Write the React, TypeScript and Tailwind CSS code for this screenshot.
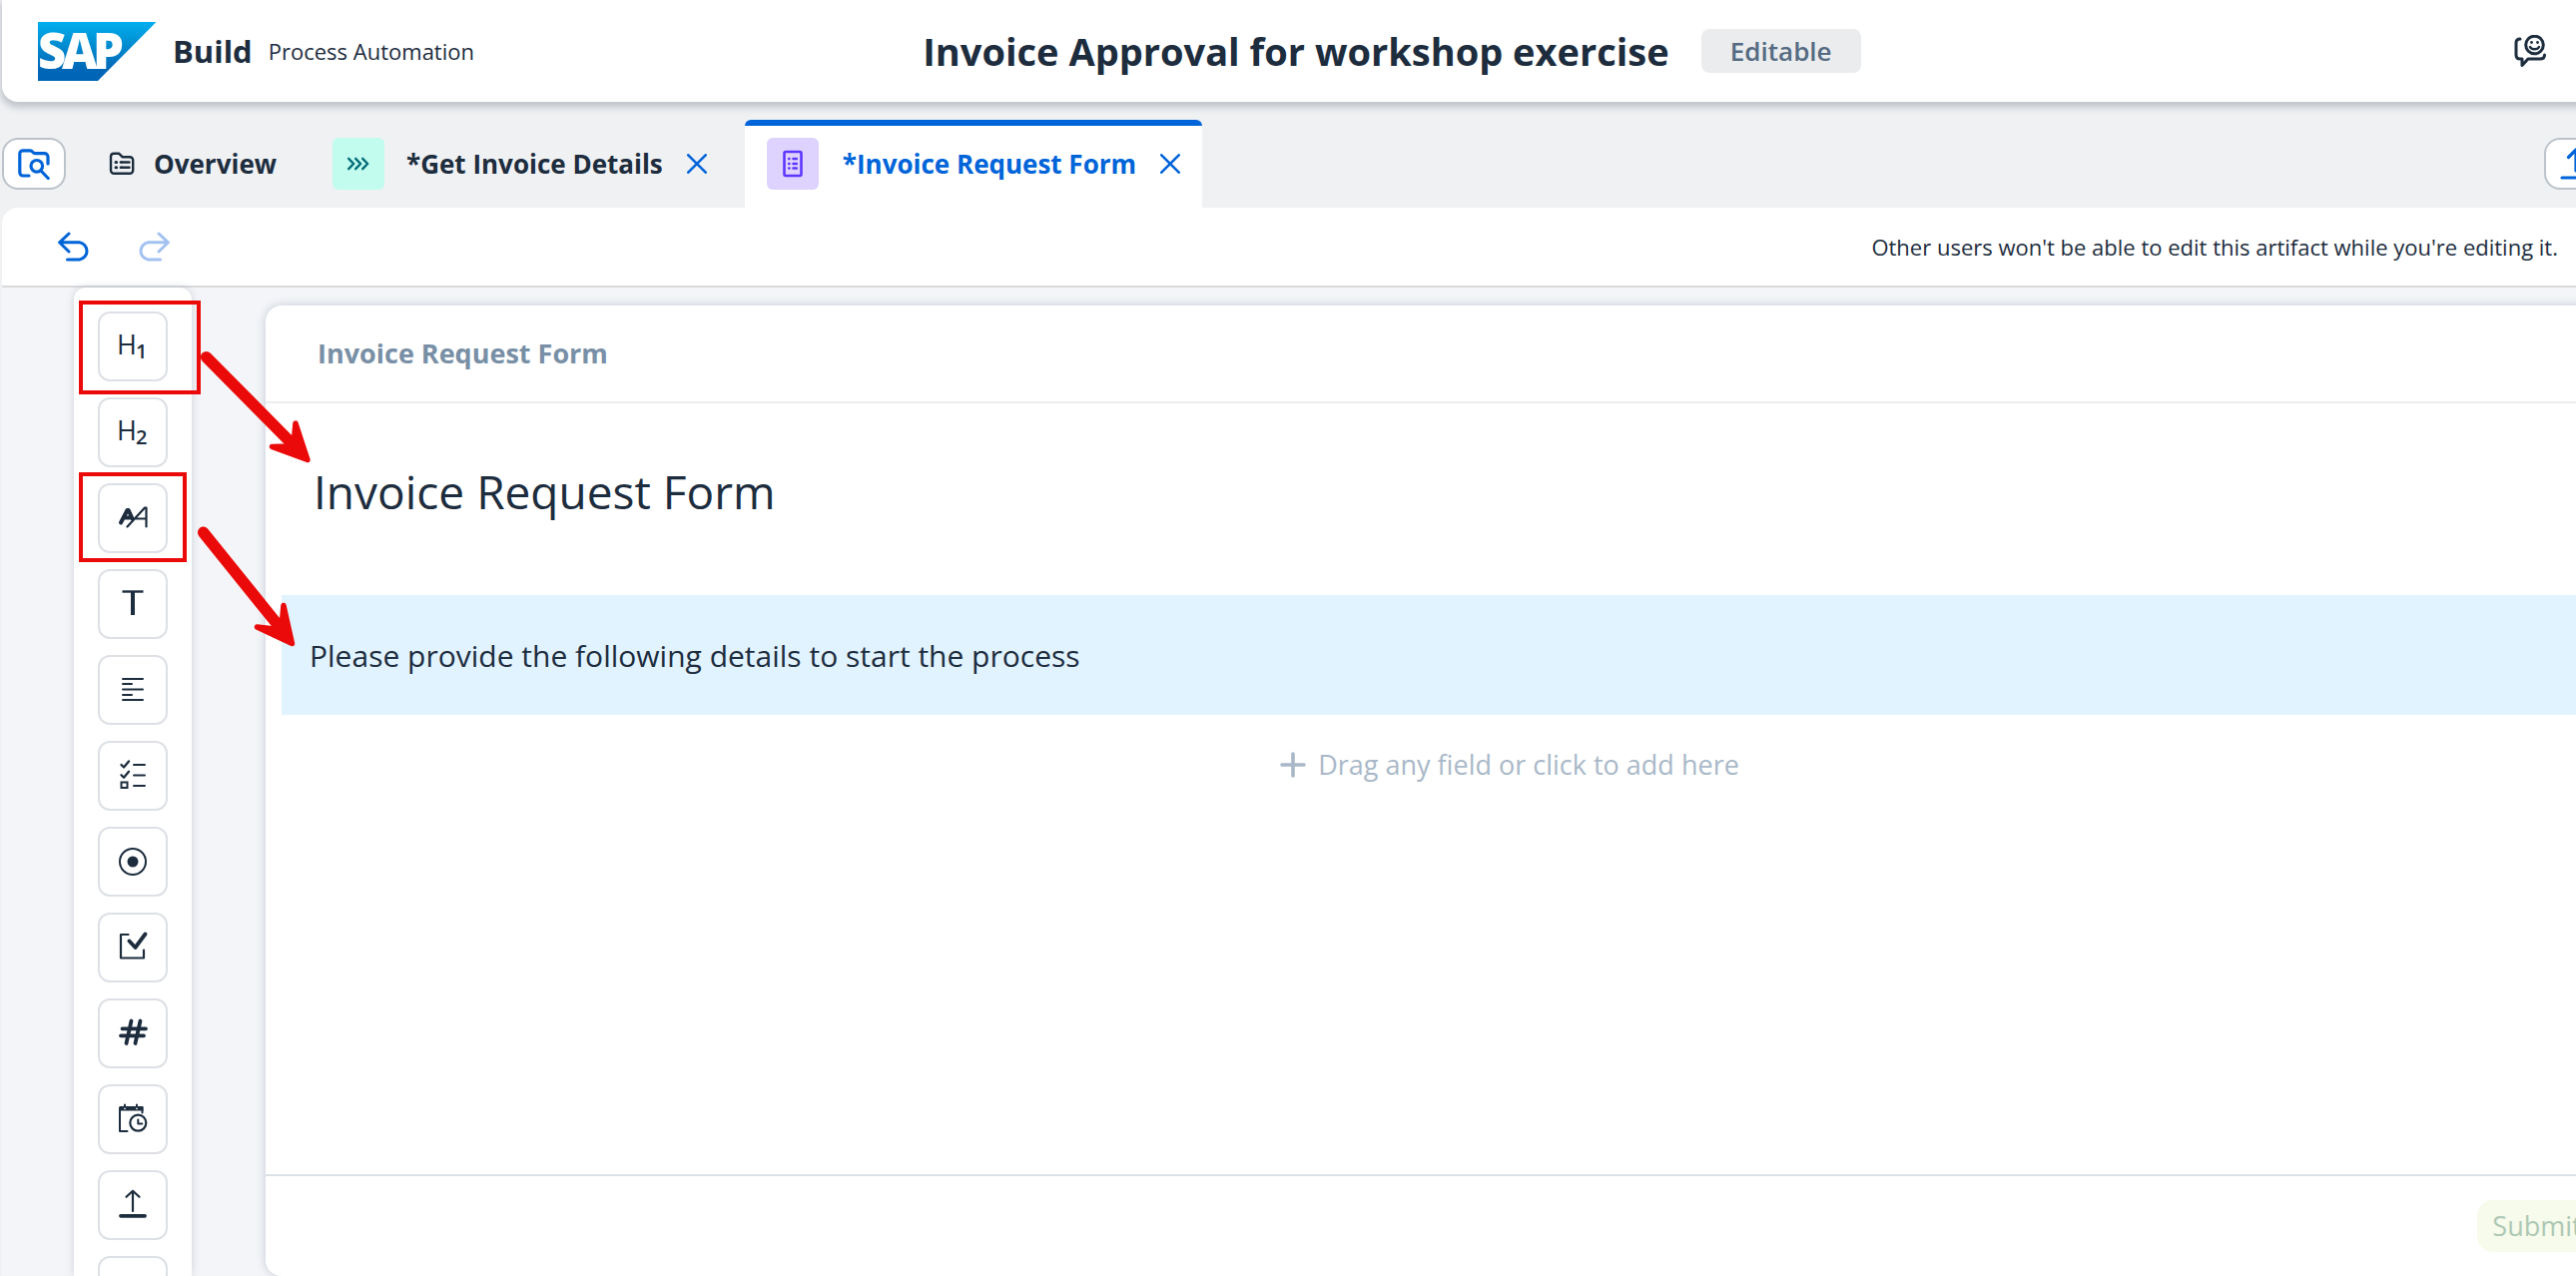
import type { ReactNode } from "react";

type IconProps = { className?: string };

const ink = "text-[#1d2d3e]";

function SapLogo() {
  return (
    <svg width="119" height="59" viewBox="0 0 119 59" role="img" aria-label="SAP" className="shrink-0">
      <defs>
        <linearGradient id="sap-blue" x1="0" y1="0" x2="0" y2="1">
          <stop offset="0" stopColor="#00aeef" />
          <stop offset="0.35" stopColor="#0090d3" />
          <stop offset="0.8" stopColor="#0067b8" />
          <stop offset="1" stopColor="#0064b4" />
        </linearGradient>
      </defs>
      <path d="M0 0H118.500L60 59H0Z" fill="url(#sap-blue)" />
      <g fill="#fff" fontFamily="Open Sans, sans-serif" fontWeight="800" fontSize="49">
        <text x="0" y="47">S</text>
        <text x="24" y="47">A</text>
        <text x="55" y="47">P</text>
      </g>
    </svg>
  );
}

function Icon({ children, className = "", size = 32 }: IconProps & { children: ReactNode; size?: number }) {
  return (
    <svg
      width={size}
      height={size}
      viewBox={`0 0 ${size} ${size}`}
      fill="none"
      stroke="currentColor"
      strokeWidth="2"
      strokeLinecap="round"
      strokeLinejoin="round"
      aria-hidden="true"
      className={`shrink-0 ${className}`}
    >
      {children}
    </svg>
  );
}

const FeedbackIcon = () => (
  <Icon className={ink}>
    <g strokeWidth="3">
      <path d="M6 4C3 4 2 5.500 2 8v12c0 2.500 1.500 4 4 4h2v6.500L14 24h12c3 0 4.500-1.500 4.500-4" />
      <circle cx="20.500" cy="10" r="8.800" />
      <path d="M16 12c1.500 3 7.500 3 9 0" strokeWidth="2.500" />
    </g>
    <g fill="currentColor" stroke="none">
      <circle cx="17.500" cy="7.500" r="1.400" />
      <circle cx="23.500" cy="7.500" r="1.400" />
    </g>
  </Icon>
);

const FolderSearchIcon = () => (
  <Icon>
    <g strokeWidth="3.200">
      <path d="M11 28H5a3.200 3.200 0 0 1-3.200-3.200V6A3.200 3.200 0 0 1 5 2.800h7.500c2 0 2.500 2.900 4.500 2.900h9.500a3.500 3.500 0 0 1 3.500 3.500V16" />
      <circle cx="18.800" cy="18.300" r="5.800" />
      <path d="m23 23 7.200 7.500" />
    </g>
  </Icon>
);

const FolderListIcon = () => (
  <Icon size={28} className={ink}>
    <g strokeWidth="2.400">
      <path d="M3 6.500A3 3 0 0 1 6 3.700h5l3.500 3.500H22a3.200 3.200 0 0 1 3.200 3.200v10.200a3.200 3.200 0 0 1-3.200 3.200H6.200A3.200 3.200 0 0 1 3 20.600Z" />
      <path d="M14 12.500h7.500M14 17.700h7.500" />
      <path d="M8 12.500h.6M8 17.700h.6" strokeWidth="3" />
      <path d="M12.800 12.500h1M12.800 17.700h1" />
    </g>
  </Icon>
);

const ChevronsIcon = () => (
  <Icon size={28} className="text-[#046c7a]">
    <g strokeWidth="2.400">
      <path d="m4.200 8.800 5 5.200-5 5.200M11.200 8.800l5 5.200-5 5.200M18.200 8.800l5 5.200-5 5.200" />
    </g>
  </Icon>
);

const FormIcon = () => (
  <Icon className="text-[#5d36ff]">
    <rect x="7.500" y="4" width="17" height="24" rx="1.500" strokeWidth="2.600" />
    <path d="M12.200 11h.2M12.200 16h.2M12.200 20.500h.2" strokeWidth="2.600" />
    <path d="M16.500 11h3.300M16.500 16h3.300M16.500 20.500h3.300" strokeWidth="2.600" />
  </Icon>
);

const CloseIcon = () => (
  <Icon size={20}>
    <path d="m1.300 1.300 17.400 17.400M18.700 1.300 1.300 18.700" strokeWidth="2.600" />
  </Icon>
);

const UndoIcon = ({ className = "" }: IconProps) => (
  <Icon className={className}>
    <path d="M11 3 1.600 11.800 11 21M1.600 11.800h20a8.700 8.700 0 0 1 0 17.200H9.500" strokeWidth="3" />
  </Icon>
);

const UploadIcon = () => (
  <Icon>
    <path d="M16 23V3M8.500 9.500 16 2l7.500 7.500M2 30h28" strokeWidth="3.200" />
  </Icon>
);

const PlusIcon = () => (
  <Icon size={26}>
    <path d="M13 2v22M2 13h22" strokeWidth="3.600" />
  </Icon>
);

function Heading({ level }: { level: string }) {
  return (
    <Icon>
      <g fill="currentColor" stroke="none" fontFamily="Open Sans, sans-serif">
        <text x="0" y="24" fontSize="27">H</text>
        <text x="19" y="28" fontSize="20" fontWeight="600">{level}</text>
      </g>
    </Icon>
  );
}

const palette: { label: string; icon: ReactNode }[] = [
  { label: "Headline 1", icon: <Heading level="1" /> },
  { label: "Headline 2", icon: <Heading level="2" /> },
  {
    label: "Paragraph",
    icon: (
      <Icon>
        <path d="M4 20.500 10.500 8h1.200l3.800 8.500M7.500 15.500h6" strokeWidth="4" />
        <path d="M10.500 24.500 28 5.500h1.500v19M19.500 16.500h10" strokeWidth="2.200" />
      </Icon>
    ),
  },
  {
    label: "Text",
    icon: (
      <Icon>
        <g strokeLinecap="butt">
          <path d="M5.500 3.500h21" strokeWidth="2.400" />
          <path d="M16 3v24" strokeWidth="4" />
        </g>
      </Icon>
    ),
  },
  { label: "Text Area", icon: <Icon><path d="M6 5h20M6 10h9M6 15.500h20M6 21h9M6 26h20" /></Icon> },
  {
    label: "Choice",
    icon: (
      <Icon>
        <path d="m4.500 5 2.500 2.500 5-6M4.500 15.300 7 17.800l5-6" strokeWidth="2.300" />
        <rect x="4.500" y="22.500" width="6" height="5.500" strokeLinejoin="miter" />
        <path d="M17 5h11M17 15.500h11M17 26h11" />
      </Icon>
    ),
  },
  {
    label: "Radio Button",
    icon: (
      <Icon>
        <circle cx="16" cy="16" r="13" />
        <circle cx="16" cy="16" r="5.500" fill="currentColor" stroke="none" />
      </Icon>
    ),
  },
  {
    label: "Checkbox",
    icon: (
      <Icon>
        <path d="M11.500 3H4v23.500h23V18.500" strokeWidth="2.200" />
        <path d="m12.500 9.500 6 6.500L28.500 2.500" strokeWidth="3.800" />
      </Icon>
    ),
  },
  {
    label: "Number",
    icon: (
      <Icon>
        <path d="M14.500 3.500 9.500 26M23.500 3.500l-5 22.500M5.500 11.300H29M4 18.300h23" strokeWidth="3.800" />
      </Icon>
    ),
  },
  {
    label: "Date",
    icon: (
      <Icon>
        <path d="M10.500 28H3V5h22.500v4.500" />
        <path d="M2.500 3h24v4.500h-24Z" fill="currentColor" stroke="none" />
        <path d="M8 1.500V3M20 1.500V3" />
        <path d="M8 5.300v.2M20 5.300v.2" stroke="#fff" strokeWidth="1.600" />
        <circle cx="21.300" cy="19.700" r="8" strokeWidth="2.200" />
        <path d="M21.300 16.500v4h4" />
      </Icon>
    ),
  },
  {
    label: "File",
    icon: (
      <Icon>
        <path d="M16 22V1.800M9.500 7.800l6.500-6 6.500 6" strokeWidth="2.200" />
        <path d="M4 26.800h24" strokeWidth="3.800" />
      </Icon>
    ),
  },
  { label: "File Attachment", icon: <Icon><path d="M6 24h20" /></Icon> },
];

function Header() {
  return (
    <header className="relative z-10 -mr-[206px] grid h-[102px] shrink-0 grid-cols-[1fr_auto_1fr] items-center rounded-bl-2xl bg-white shadow-[0_4px_6px_2px_rgba(85,95,110,0.28)]">
      <div className="flex items-center gap-4 pl-9">
        <SapLogo />
        <span className="text-[31px] leading-10 font-bold">Build</span>
        <span className="text-[22px] leading-8">Process Automation</span>
      </div>
      <div className="flex items-center gap-8">
        <h1 className="text-[38px] leading-[52px] font-bold">Invoice Approval for workshop exercise</h1>
        <span className="flex h-11 w-40 items-center justify-center rounded-lg bg-[#eaecee] text-[26px] font-semibold text-[#556b82]">
          Editable
        </span>
      </div>
      <div className="flex justify-end pr-[236px]">
        <button aria-label="Feedback">
          <FeedbackIcon />
        </button>
      </div>
    </header>
  );
}

function Tabs() {
  return (
    <nav className="flex h-[106px] shrink-0 items-stretch pt-[18px] text-[26px] font-bold">
      <button
        aria-label="Browse project"
        className="flex h-[52px] w-16 items-center justify-center self-center rounded-2xl border-2 border-[#bcc3ca] bg-white text-[#0064d9]"
      >
        <FolderSearchIcon />
      </button>
      <a href="#overview" className="ml-5 flex items-center gap-[18px] pr-[18px] pl-[22px]">
        <FolderListIcon />
        Overview
      </a>
      <div className="ml-4 flex items-center gap-6 px-[22px]">
        <a href="#details" className="flex items-center gap-[22px]">
          <span className="flex size-[52px] items-center justify-center rounded-md bg-[#c2fcee]">
            <ChevronsIcon />
          </span>
          *Get Invoice Details
        </a>
        <button aria-label="Close Get Invoice Details" className="text-[#0064d9]">
          <CloseIcon />
        </button>
      </div>
      <div className="relative ml-4 flex items-center gap-6 overflow-hidden rounded-t-md bg-white px-[22px] text-[#0064d9]">
        <span className="absolute inset-x-0 top-0 h-1.5 bg-[#0064d9]" />
        <a href="#form" aria-current="page" className="flex items-center gap-6">
          <span className="flex size-[52px] items-center justify-center rounded-md bg-[#ded3ff]">
            <FormIcon />
          </span>
          *Invoice Request Form
        </a>
        <button aria-label="Close Invoice Request Form">
          <CloseIcon />
        </button>
      </div>
      <button
        aria-label="Release"
        className="-mr-8 ml-auto flex h-[52px] w-16 items-center justify-center self-center rounded-2xl border-2 border-[#bcc3ca] bg-white text-[#0064d9]"
      >
        <UploadIcon />
      </button>
    </nav>
  );
}

function Toolbar() {
  return (
    <div className="flex h-20 shrink-0 items-center rounded-tl-2xl border-b-2 border-[#d9dadb] bg-white pr-[18px] pl-14">
      <button aria-label="Undo" className="text-[#0064d9]">
        <UndoIcon />
      </button>
      <button aria-label="Redo" disabled className="ml-12 text-[#a3c2f2]">
        <UndoIcon className="-scale-x-100" />
      </button>
      <p className="ml-auto text-[22px] leading-8">Other users won't be able to edit this artifact while you're editing it.</p>
    </div>
  );
}

function Palette() {
  return (
    <aside className="ml-[72px] flex w-[118px] shrink-0 flex-col items-center gap-4 rounded-t-xl bg-white pt-6 shadow-[0_0_8px_rgba(85,107,130,0.25)]">
      {palette.map((item) => (
        <button
          key={item.label}
          aria-label={item.label}
          className="flex size-[70px] shrink-0 items-center justify-center rounded-xl border-2 border-[#dde0e5] bg-white"
        >
          {item.icon}
        </button>
      ))}
    </aside>
  );
}

function FormCanvas() {
  return (
    <main className="mt-[18px] -mr-[178px] ml-[74px] flex min-w-0 flex-1 flex-col rounded-2xl bg-white shadow-[0_0_8px_1px_rgba(85,107,130,0.25)]">
      <div className="flex h-[98px] shrink-0 items-center border-b-2 border-[#ebecee] pl-[52px] text-[27px] font-bold text-[#788fa6]">
        Invoice Request Form
      </div>
      <div className="flex flex-1 flex-col px-4">
        <h2 className="flex h-48 items-center pb-4 pl-8 text-[46px]">Invoice Request Form</h2>
        <p className="flex h-[120px] items-center bg-[#e1f3ff] pl-7 text-[30px]">
          Please provide the following details to start the process
        </p>
        <button className="flex h-[100px] items-center justify-center gap-3 text-[27px] text-[#a9b8c8]">
          <PlusIcon />
          Drag any field or click to add here
        </button>
      </div>
      <footer className="flex shrink-0 justify-end border-t-2 border-[#dde2e6] py-6 pr-[157px]">
        <button disabled className="h-[52px] w-[120px] rounded-2xl bg-[#f6fbeb] text-[27px] text-[#adc8b4]">
          Submit
        </button>
      </footer>
    </main>
  );
}

function Annotations() {
  return (
    <svg className="pointer-events-none absolute top-0 left-0 z-20" width="330" height="660" viewBox="0 0 330 660" fill="none" aria-hidden="true">
      <g stroke="#eb0a0a" strokeLinecap="round" strokeLinejoin="round">
        <path d="M81 303H199V393H81Z" strokeWidth="4" strokeLinejoin="miter" />
        <path d="M81 475H185V561H81Z" strokeWidth="4" strokeLinejoin="miter" />
        <path d="M206.700 357.700 296 448" strokeWidth="11.500" />
        <path d="M296 424 294.500 440 288 447 272.500 447.500 308 460.500Z" fill="#eb0a0a" strokeWidth="5.500" />
        <path d="M203.700 533.300 280 628" strokeWidth="11.500" />
        <path d="M284 606.500 282.500 622 275 630 257.500 628 292.500 644.500Z" fill="#eb0a0a" strokeWidth="5.500" />
      </g>
    </svg>
  );
}

export default function App() {
  return (
    <div className="relative flex h-screen flex-col overflow-hidden bg-[#eff1f3] pl-0.5 font-['Open_Sans',sans-serif] text-[#1d2d3e]">
      <Header />
      <Tabs />
      <Toolbar />
      <div className="flex min-h-0 flex-1 bg-[#f4f5f8]">
        <Palette />
        <FormCanvas />
      </div>
      <Annotations />
    </div>
  );
}
